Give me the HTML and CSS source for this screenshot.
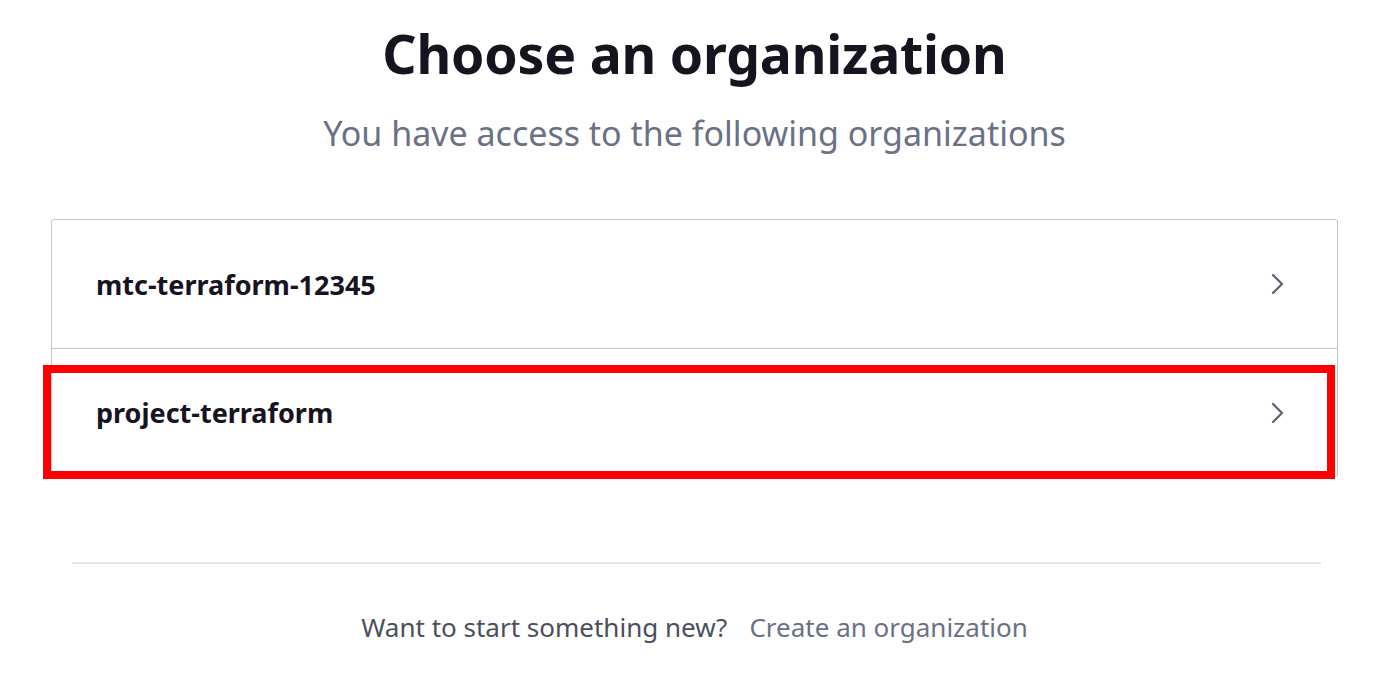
FILE: index.html
```html
<!DOCTYPE html>
<html lang="en">
<head>
<meta charset="utf-8">
<title>Choose an organization</title>
<link rel="stylesheet" href="styles.css">
</head>
<body>
<main class="page">
  <h1 class="title">Choose an organization</h1>
  <p class="subtitle">You have access to the following organizations</p>
  <ul class="org-list">
    <li class="org-row">
      <span class="org-name">mtc-terraform-12345</span>
      <svg class="chev" width="14" height="22" viewBox="0 0 14 22"><path d="M2 2 L11 11 L2 20" fill="none" stroke="currentColor" stroke-width="2.4" stroke-linecap="round" stroke-linejoin="round"/></svg>
    </li>
    <li class="org-row">
      <span class="org-name">project-terraform</span>
      <svg class="chev" width="14" height="22" viewBox="0 0 14 22"><path d="M2 2 L11 11 L2 20" fill="none" stroke="currentColor" stroke-width="2.4" stroke-linecap="round" stroke-linejoin="round"/></svg>
      <span class="highlight"></span>
    </li>
  </ul>
  <hr class="divider">
  <p class="footer"><span class="footer-q">Want to start something new?</span><a class="footer-link" href="#">Create an organization</a></p>
</main>
</body>
</html>
```
FILE: styles.css
```css
* { box-sizing: border-box; }
html, body { margin: 0; padding: 0; background: #fff; }
body { font-family: "Noto Sans", "Open Sans", sans-serif; color: #17141f; }
.page {
  width: 1400px;
  height: 680px;
  padding: 22px 62px 0 51px;
  display: flex;
  flex-direction: column;
  align-items: stretch;
}
.title {
  margin: 0;
  text-align: center;
  font-size: 53.5px;
  font-weight: 700;
  line-height: 64px;
  color: #17141f;
  letter-spacing: -0.2px;
}
.subtitle {
  margin: 27px 0 0;
  text-align: center;
  font-size: 34px;
  line-height: 40px;
  color: #6b7185;
}
.org-list {
  list-style: none;
  margin: 66px 0 0;
  padding: 0;
  border: 1.5px solid #c5c5cf;
  border-radius: 3px;
}
.org-row {
  position: relative;
  height: 128px;
  display: flex;
  align-items: center;
  justify-content: space-between;
  padding: 0 52px 0 44px;
}
.org-row + .org-row { border-top: 1.5px solid #c5c5cf; }
.org-name {
  font-size: 27px;
  font-weight: 700;
  color: #17141f;
}
.chev { color: #5f6577; }
.highlight {
  position: absolute;
  left: -9px;
  top: 16px;
  right: 2px;
  bottom: -3px;
  border: 8px solid #ff0000;
  pointer-events: none;
}
.divider {
  margin: 85px 17px 0 21px;
  border: 0;
  border-top: 2px solid #e6e5e8;
}
.footer {
  margin: 45px 0 0;
  text-align: center;
  font-size: 26px;
  color: #4a4f5e;
}
.footer-q { margin-right: 22px; }
.footer-link { color: #6b7185; text-decoration: none; }
```
